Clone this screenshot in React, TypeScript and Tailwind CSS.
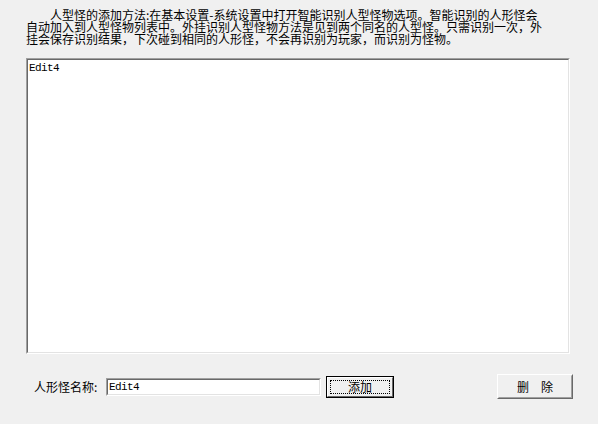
import React from "react";

const cjk = "font-['SimSun','Noto_Sans_CJK_SC',sans-serif]";
const mono = "font-['Liberation_Mono',monospace]";

const Sunken = ({ className, children }: { className: string; children?: React.ReactNode }) => (
  <div className={`border border-t-[#a0a0a0] border-l-[#a0a0a0] border-b-white border-r-white ${className}`}>
    <div className="w-full h-full border border-t-[#696969] border-l-[#696969] border-b-[#e3e3e3] border-r-[#e3e3e3] bg-white">
      {children}
    </div>
  </div>
);

export default function App() {
  return (
    <div className={`w-[598px] h-[424px] bg-[#f0f0f0] flex flex-col text-black ${cjk}`}>
      <div className="h-[58px] pt-[9px] pl-[26px] text-[12px] leading-[12px] whitespace-nowrap">
        <div className="pl-[24px]">人型怪的添加方法:在基本设置-系统设置中打开智能识别人型怪物选项。智能识别的人形怪会</div>
        <div>自动加入到人型怪物列表中。外挂识别人型怪物方法是见到两个同名的人型怪。只需识别一次，外</div>
        <div>挂会保存识别结果，下次碰到相同的人形怪，不会再识别为玩家，而识别为怪物。</div>
      </div>

      <Sunken className="ml-[26px] w-[544px] h-[296px]">
        <div className={`pl-[1px] pt-[2px] text-[11px] leading-[12px] tracking-[-0.6px] ${mono}`}>Edit4</div>
      </Sunken>

      <div className="mt-[20px] h-[25px] flex items-center pl-[34px]">
        <span className="w-[72px] text-[12px] leading-[12px]">人形怪名称:</span>
        <Sunken className="w-[215px] h-[18px]">
          <div className={`pl-[1px] pt-[1px] text-[11px] leading-[13px] tracking-[-0.6px] ${mono}`}>Edit4</div>
        </Sunken>
        <button className="ml-[5px] w-[68px] h-[22px] border border-black bg-[#f0f0f0] p-0">
          <div className="w-full h-full border border-t-white border-l-white border-b-[#696969] border-r-[#696969] p-[2px]">
            <div className="w-full h-full border border-dotted border-black flex items-center justify-center text-[12px] leading-[12px]">
              添加
            </div>
          </div>
        </button>
        <button className="ml-[103px] w-[76px] h-[25px] border border-t-white border-l-white border-b-[#696969] border-r-[#696969] bg-[#f0f0f0] p-0">
          <div className="w-full h-full border border-t-[#f0f0f0] border-l-[#f0f0f0] border-b-[#a0a0a0] border-r-[#a0a0a0] flex items-center justify-center text-[12px] leading-[12px] gap-[12px]">
            <span>删</span>
            <span>除</span>
          </div>
        </button>
      </div>
    </div>
  );
}
